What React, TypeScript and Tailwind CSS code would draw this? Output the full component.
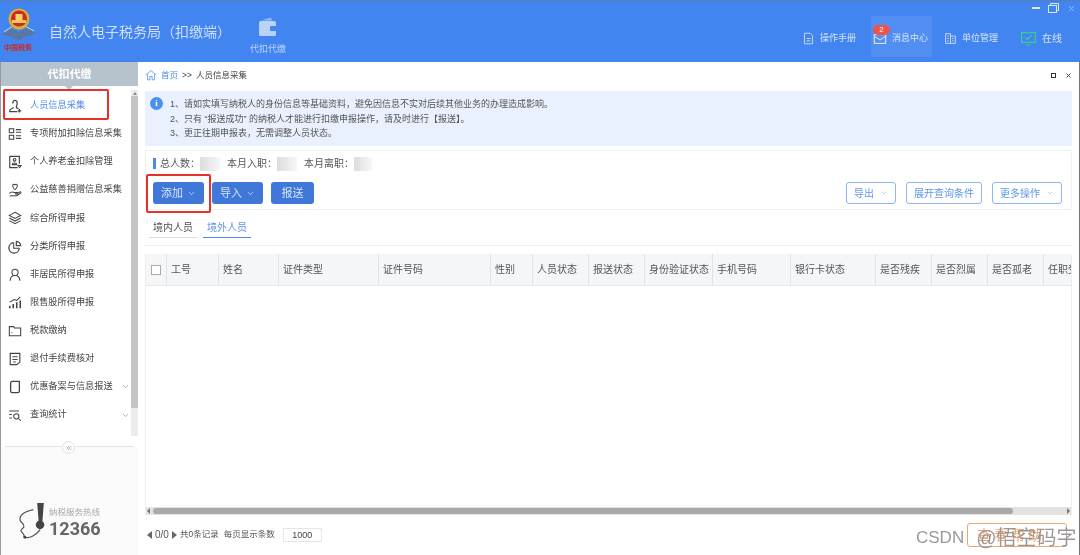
import * as React from 'react';
import { ChevronDown, ChevronsLeft, X } from 'lucide-react';

const cjk = "font-['Liberation_Sans','Noto_Sans_CJK_SC',sans-serif]";

function Icon(p: { children: React.ReactNode, size?: number, color?: string, sw?: number }) {
  const size = p.size ?? 14;
  return (
    <svg width={size} height={size} viewBox="0 0 16 16" fill="none" stroke={p.color ?? '#444'} strokeWidth={p.sw ?? 1.2} className="shrink-0">
      {p.children}
    </svg>
  );
}

const menu: { label: string, icon: React.ReactNode, active?: boolean, arrow?: boolean }[] = [
  { label: '人员信息采集', active: true, icon: <><path d="M5.500 5c0-2 1-3.500 2.500-3.500S10.500 3 10.500 5 9.500 8.500 9.500 9.500 12 11 12 11M6.500 9.500c0 1-4.500 2-4.500 3.500v1.500h8.500" strokeWidth="1.400" /><path d="M11 13.500h4M13 11.500v4" strokeWidth="1.400" /></> },
  { label: '专项附加扣除信息采集', icon: <><rect x="1.500" y="2" width="5" height="4.500" /><rect x="1.500" y="9.500" width="5" height="4.500" /><path d="M9 3h6M9 6h6M9 10h6M9 13h6" /></> },
  { label: '个人养老金扣除管理', icon: <><path d="M11 14.500H2v-13h11V10" strokeWidth="1.300" /><circle cx="7.500" cy="5.500" r="1.500" /><path d="M5 11c0-2.500 5-2.500 5 0zM11.500 12h3.500l-1.750 2.500z" /></> },
  { label: '公益慈善捐赠信息采集', icon: <><path d="M8 7.500C5 5.500 4.500 1.500 6.700 1.500c.7 0 1.300.5 1.300 1 0-.5.6-1 1.300-1C11.500 1.500 11 5.500 8 7.500z" /><path d="M1.500 12c2-2.500 4-2 6-1h3c1 0 1 1.500 0 1.500H8M10 12l4-2c1 0 1 1 .5 1.500L10 14.500H4l-2 .5" /></> },
  { label: '综合所得申报', icon: <><path d="M8 1.500 14.500 5 8 8.500 1.500 5z" /><path d="M1.500 8 8 11.500 14.500 8M1.500 11 8 14.500 14.500 11" /></> },
  { label: '分类所得申报', icon: <><path d="M6.500 3A6 6 0 1 0 13 9.500" strokeWidth="1.500" /><path d="M6.500 3v6.500H13" strokeWidth="1.200" /><path d="M9.500 1.500A5.500 5.500 0 0 1 14.500 6.500H9.500z" strokeWidth="1.300" /></> },
  { label: '非居民所得申报', icon: <><circle cx="8" cy="5" r="3.500" /><path d="M2.500 14.500c0-4 2-6 5.500-6s5.500 2 5.500 6" /></> },
  { label: '限售股所得申报', icon: <><path d="M2 14v-3M6 14V9M10 14V7M14 14V5" strokeWidth="1.800" /><path d="M2 7 7 4l3 1 4-4" /></> },
  { label: '税款缴纳', icon: <><path d="M1.500 3h5l1 1.500h7v9h-13z" /><path d="M4 10h1" /></> },
  { label: '退付手续费核对', icon: <><path d="M2.500 1.500h11v10L10 14.500H2.500z" strokeWidth="1.300" /><path d="M5 5.500h6M5 8.500h6M6 11.500h3" /></> },
  { label: '优惠备案与信息报送', arrow: true, icon: <><path d="M3 3.500Q3 1.500 5 1.500h8v11q0 2-2 2H5q-2 0-2-2z" strokeWidth="1.500" /></> },
  { label: '查询统计', arrow: true, icon: <><path d="M1.500 3.500h11M1.500 7.500h3M1.500 11.500h3" /><circle cx="9.500" cy="9.500" r="3" /><path d="M12 12l2.500 2.500" /></> },
];

const columns: [string, string][] = [
  ['工号', 'w-[52px]'],
  ['姓名', 'w-[60px]'],
  ['证件类型', 'w-[100px]'],
  ['证件号码', 'w-[112px]'],
  ['性别', 'w-[42px]'],
  ['人员状态', 'w-[56px]'],
  ['报送状态', 'w-[56px]'],
  ['身份验证状态', 'w-[68px]'],
  ['手机号码', 'w-[78px]'],
  ['银行卡状态', 'w-[85px]'],
  ['是否残疾', 'w-[56px]'],
  ['是否烈属', 'w-[56px]'],
  ['是否孤老', 'w-[56px]'],
  ['任职受雇', 'w-[28px]'],
];

function TopLink(p: { label: string, icon: React.ReactNode, className?: string }) {
  return (
    <div className={"h-[41px] flex items-center pt-[4px] gap-[5px] text-[9px] text-[#d5e3fb] " + (p.className ?? '')}>
      {p.icon}
      <span>{p.label}</span>
    </div>
  );
}

function Header() {
  return (
    <div className="h-[62px] shrink-0 bg-[#4285f1] border-t border-[#5a7fb8] flex relative">
      <div className="w-[49px] shrink-0 pl-[1px] pt-[6px] flex flex-col items-start">
        <svg width="36" height="34" viewBox="0 0 36 34">
          <path d="M1 27 10 21l8 4 8-4 9 5-17 7z" fill="#5b76a3" />
          <path d="M3 25 12 19l6 3 6-3 9 5" fill="none" stroke="#cfd8e6" strokeWidth="1" />
          <circle cx="18" cy="12" r="10.500" fill="#d8ae3d" />
          <circle cx="18" cy="11.500" r="8" fill="#d3271f" />
          <path d="M11 13h14v3H11z" fill="#ecc95c" />
          <path d="M14.500 7h7v6h-7z" fill="#f1d568" />
        </svg>
        <span className="text-[7px] leading-[8px] mt-[3px] ml-[3px] font-bold text-[#d3271f] whitespace-nowrap">中国税务</span>
      </div>
      <div className="w-[200px] shrink-0 pt-[21px] text-[14px] leading-[20px] text-[#cfdffb]">自然人电子税务局（扣缴端）</div>
      <div className="w-[38px] flex flex-col items-center pt-[16px]">
        <svg width="20" height="20" viewBox="0 0 20 20" fill="#b9d2f8">
          <path d="M3 3.500 13 0.500l1 3H3z" opacity=".7" />
          <rect x="1" y="4" width="17" height="15" rx="1.500" />
          <rect x="12" y="9" width="7" height="5" rx="1" fill="#4285f1" />
        </svg>
        <span className="text-[9px] leading-[14px] mt-[5px] text-[#bcd3f9] whitespace-nowrap">代扣代缴</span>
      </div>
      <div className="flex-1 flex justify-end items-start pt-[15px] pr-[18px]">
        <TopLink label="操作手册" className="mr-[15px]" icon={<Icon size={13} color="#c7daf9"><path d="M3 1.500h7l3 3v10H3zM5.500 8h5M5.500 11h5" /></Icon>} />
        <div className="w-[61px] h-[41px] bg-[#528ef2] flex items-center pl-[2px] relative mr-[12px]">
          <TopLink label="消息中心" className="gap-[5px]" icon={<Icon color="#dbe7fb"><rect x="1.500" y="3" width="13" height="10" /><path d="M1.500 5 8 9l6.500-4" /></Icon>} />
          <span className="absolute left-[2px] top-[9px] w-[17px] h-[10px] rounded-full bg-[#f0524a] text-white text-[8px] leading-[10px] text-center">2</span>
        </div>
        <TopLink label="单位管理" className="mr-[23px]" icon={<Icon size={13} color="#c7daf9"><path d="M2 2h6v12H2zM8 5h6v9H8zM4 5h2M4 8h2M4 11h2M10 8h2M10 11h2" /></Icon>} />
        <div className="h-[41px] flex items-center pt-[4px] gap-[6px] text-[10px] text-[#d5e3fb]">
          <svg width="15" height="14" viewBox="0 0 15 14" fill="none" stroke="#35d08f" strokeWidth="1.200">
            <rect x="0.600" y="0.600" width="13.800" height="9.800" />
            <path d="M5 13h5M4.500 5.500l2 2 4-4" />
          </svg>
          <span>在线</span>
        </div>
      </div>
      <div className="absolute right-[4px] top-[2px] flex items-center gap-[8px]">
        <div className="w-[8px] h-[1.500px] bg-[#dbe7fb]" />
        <svg width="11" height="10" viewBox="0 0 11 10" fill="none" stroke="#dbe7fb"><rect x="0.500" y="2.500" width="8" height="7" /><path d="M2.500 2.500v-2h8v7h-2" /></svg>
        <X size={9} color="#a9c6f7" />
      </div>
    </div>
  );
}

function Sidebar() {
  return (
    <div className="w-[138px] shrink-0 flex flex-col border-l border-[#9a9a9a] bg-white relative">
      <div className="h-[24px] bg-[#b6c3cd] text-white text-[11px] font-bold leading-[24px] text-center shrink-0">代扣代缴</div>
      <div className="absolute left-[64px] top-[24px] w-0 h-0 border-x-[4px] border-x-transparent border-t-[4px] border-t-[#b6c3cd]" />
      <div className="h-[346px] flex shrink-0 pt-[4px]">
        <div className="flex-1 pl-[7px] pt-[2px]">
          {menu.map((m) => (
            <div key={m.label} className={"h-[28.100px] flex items-center gap-[8px] text-[9.200px] whitespace-nowrap " + (m.active ? 'text-[#4a8ae8]' : 'text-[#444]')}>
              <Icon>{m.icon}</Icon>
              <span className="flex-1">{m.label}</span>
              {m.arrow && <ChevronDown size={9} color="#999" className="mr-[1px]" />}
            </div>
          ))}
        </div>
        <div className="w-[7px] h-[346px] bg-[#ececec] flex flex-col shrink-0">
          <div className="h-[6px] flex items-center justify-center"><div className="w-0 h-0 border-x-[2px] border-x-transparent border-b-[3px] border-b-[#888]" /></div>
          <div className="h-[312px] bg-[#c4c4c4]" />
        </div>
      </div>
      <div className="mt-[14px] mx-[4px] relative h-px bg-[#e4e4e4] shrink-0">
        <div className="absolute left-[57px] -top-[5px] w-[13px] h-[13px] rounded-full bg-white border border-[#e0e0e0] flex items-center justify-center">
          <ChevronsLeft size={8} color="#888" />
        </div>
      </div>
      <div className="flex-1 flex items-start pl-[16px] pt-[56px] gap-[3px] bg-[#fafafa]">
        <svg width="29" height="38" viewBox="0 0 30 40" fill="none" stroke="#555" strokeWidth="1.300">
          <path d="M21 0h7l-1.500 19h-4z" fill="#444" stroke="none" />
          <circle cx="24" cy="23" r="4.500" fill="#444" stroke="none" />
          <path d="M17 7C8 9 2 13 3 18c.5 3 5 3 4 7-.5 2-3 2-3 4 0 3 3 2 3 5 0 3 5 3 9 1 3-1.500 6-4 8-7" />
          <circle cx="8" cy="36" r="1.500" fill="#444" stroke="none" />
        </svg>
        <div className="pt-[3px]">
          <div className="text-[8.500px] leading-[12px] text-[#aaa] whitespace-nowrap">纳税服务热线</div>
          <div className="text-[18px] leading-[21px] font-bold text-[#666] font-['Roboto']">12366</div>
        </div>
      </div>
    </div>
  );
}

function Blur(p: { className: string }) {
  return <span className={"inline-block h-[14px] bg-gradient-to-r from-[#dcdcdc] to-[#f7f7f7] " + p.className} />;
}

function PrimaryBtn(p: { label: string, arrow?: boolean, className: string }) {
  return (
    <div className={"h-[22px] rounded-[3px] bg-[#3f78d8] text-[#d8e5fb] text-[11px] flex items-center justify-between px-[8px] " + p.className}>
      <span>{p.label}</span>
      {p.arrow && <ChevronDown size={9} color="#d8e5fb" />}
    </div>
  );
}

function GhostBtn(p: { label: string, arrow?: boolean, className: string }) {
  return (
    <div className={"h-[22px] rounded-[3px] border border-[#8fb4ef] text-[#5f95ea] text-[10px] flex items-center justify-between px-[7px] " + p.className}>
      <span>{p.label}</span>
      {p.arrow && <ChevronDown size={8} color="#9bb9ea" />}
    </div>
  );
}

function Main() {
  return (
    <div className="flex-1 min-w-0 bg-white flex flex-col border-r border-[#777] pl-[7px] pr-[7px]">
      <div className="h-[28px] shrink-0 flex items-center pb-[2px] text-[8.500px] text-[#444] gap-[3px]">
        <svg width="12" height="12" viewBox="0 0 16 16" fill="none" stroke="#5b93e6" strokeWidth="1.100"><path d="M1 8 8 2l7 6M3.500 7v7.500h3V10h3v4.500h3V7" /></svg>
        <span className="text-[#4a8ae8] ml-[1px]">首页</span>
        <span className="ml-[1px]">&gt;&gt;</span>
        <span className="ml-[1px]">人员信息采集</span>
        <div className="flex-1" />
        <div className="w-[5px] h-[5px] border border-[#333] mr-[6px]" />
        <X size={7} color="#333" strokeWidth={3} />
      </div>
      <div className="h-[55px] shrink-0 mt-[1px] bg-[#e8f1fd] flex pl-[5px] pt-[6px] text-[9px] leading-[14.500px] text-[#555]">
        <div className="w-[13px] h-[13px] rounded-full bg-[#4a90ee] text-white text-[9px] leading-[13px] text-center font-bold font-['Liberation_Serif'] shrink-0">i</div>
        <div className="ml-[7px]">
          <div>1、请如实填写纳税人的身份信息等基础资料，避免因信息不实对后续其他业务的办理造成影响。</div>
          <div>2、只有 “报送成功” 的纳税人才能进行扣缴申报操作，请及时进行【报送】。</div>
          <div>3、更正往期申报表，无需调整人员状态。</div>
        </div>
      </div>
      <div className="h-[60px] shrink-0 mt-[4px] border border-[#eef0f3] pl-[7px] pt-[5px]">
        <div className="flex items-center h-[15px] text-[10px] text-[#555]">
          <div className="w-[3px] h-[11px] bg-[#4a8ae8] mr-[4px]" />
          <span>总人数：</span><Blur className="w-[20px] mr-[7px]" />
          <span>本月入职：</span><Blur className="w-[20px] mr-[7px]" />
          <span>本月离职：</span><Blur className="w-[18px]" />
        </div>
        <div className="flex mt-[11px] pr-[9px]">
          <PrimaryBtn label="添加" arrow className="w-[51px]" />
          <PrimaryBtn label="导入" arrow className="w-[51px] ml-[8px]" />
          <PrimaryBtn label="报送" className="w-[43px] ml-[8px] justify-center" />
          <div className="flex-1" />
          <GhostBtn label="导出" arrow className="w-[50px]" />
          <GhostBtn label="展开查询条件" className="w-[76px] ml-[10px] justify-center" />
          <GhostBtn label="更多操作" arrow className="w-[70px] ml-[10px]" />
        </div>
      </div>
      <div className="h-[28px] shrink-0 mt-[8px] flex border-b border-[#f0f0f0] text-[10px] leading-[19px]">
        <div className="w-[48px] ml-[4px] text-center text-[#555] border-b border-[#ddd] h-[20px]">境内人员</div>
        <div className="w-[48px] ml-[6px] text-center text-[#5f95ea] border-b border-[#4a8ae8] h-[20px]">境外人员</div>
      </div>
      <div className="flex-1 min-h-0 mt-[8px] border-x border-[#eee] flex flex-col overflow-hidden">
        <div className="h-[32px] shrink-0 bg-[#f5f6f8] flex text-[10px] text-[#555] border-b border-[#e8e8e8] overflow-hidden">
          <div className="w-[21px] shrink-0 flex items-center justify-center border-r border-[#e3e3e3]">
            <div className="w-[10px] h-[10px] bg-white border border-[#aaa]" />
          </div>
          {columns.map(([label, w]) => (
            <div key={label} className={w + " shrink-0 flex items-center pl-[4px] border-r border-[#e3e3e3] whitespace-nowrap overflow-hidden"}>{label}</div>
          ))}
        </div>
        <div className="flex-1" />
        <div className="h-[8px] shrink-0 bg-[#e2e2e2] flex items-center">
          <div className="w-0 h-0 ml-[1px] border-y-[3px] border-y-transparent border-r-[3px] border-r-[#777]" />
          <div className="w-[860px] h-[6px] ml-[3px] rounded-full bg-[#a9a9a9]" />
          <div className="flex-1" />
          <div className="w-0 h-0 mr-[1px] border-y-[3px] border-y-transparent border-l-[3px] border-l-[#777]" />
        </div>
      </div>
      <div className="h-[40px] shrink-0 flex items-center text-[8.500px] text-[#555] pb-[1px]">
        <div className="w-0 h-0 ml-[2px] mr-[3px] border-y-[4px] border-y-transparent border-r-[5px] border-r-[#666]" />
        <span className="text-[10px]">0/0</span>
        <div className="w-0 h-0 ml-[3px] mr-[3px] border-y-[4px] border-y-transparent border-l-[5px] border-l-[#666]" />
        <span>共0条记录</span>
        <span className="ml-[5px]">每页显示条数</span>
        <div className="w-[39px] h-[14px] ml-[8px] border border-[#e6e6e6] text-center text-[9px] leading-[12px] text-[#444]">1000</div>
      </div>
    </div>
  );
}

export default function App() {
  return (
    <div className={"w-[1080px] h-[555px] relative overflow-hidden flex flex-col bg-white blur-[0.35px] " + cjk}>
      <Header />
      <div className="flex-1 min-h-0 flex">
        <Sidebar />
        <Main />
      </div>
      {/* red note boxes and the floating bits at the corner */}
      <div className="absolute left-[3px] top-[89px] w-[106px] h-[31px] border-[2px] border-[#e8302a] rounded-[2px]" />
      <div className="absolute left-[146px] top-[174px] w-[65px] h-[39px] border-[2px] border-[#e8302a] rounded-[2px]" />
      <div className="absolute left-[967px] top-[523px] w-[100px] h-[24px] border border-[#f2a56c] rounded-[3px] bg-white text-[#f0a06a] text-[14px] tracking-[3px] leading-[22px] pl-[9px]">查看帮助</div>
      <div className="absolute left-[916px] top-[525px] flex items-center text-[#999] whitespace-nowrap leading-[26px]">
        <span className="text-[17px]">CSDN</span>
        <span className="text-[20px] ml-[12px]">@悟空码字</span>
      </div>
    </div>
  );
}
